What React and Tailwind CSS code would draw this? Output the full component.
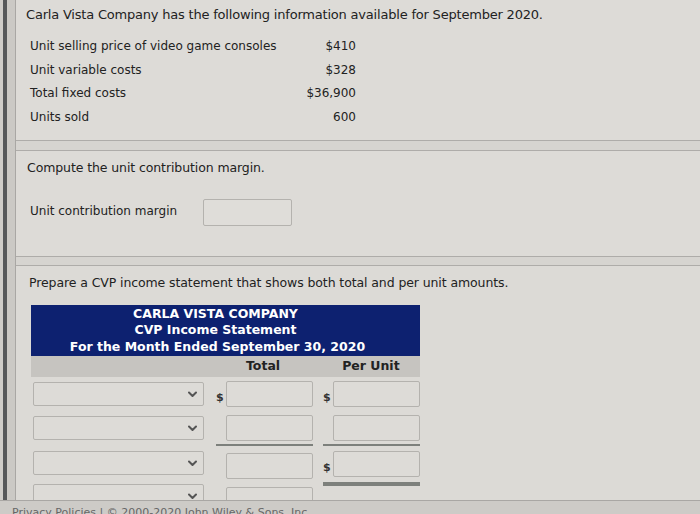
import React from 'react';

const font = { fontFamily: '"DejaVu Sans", Verdana, sans-serif' };

function Chevron() {
  return (
    <svg width="9" height="7" viewBox="0 0 9 7" className="shrink-0">
      <path d="M1 1.5 L4.5 5 L8 1.5" fill="none" stroke="#555" strokeWidth="2" strokeLinecap="round" strokeLinejoin="round" />
    </svg>
  );
}

function Select() {
  return (
    <div className="w-[171px] h-[24px] mr-[2px] shrink-0 items-center border border-[#b4b2ae] rounded-[2px] bg-[#dddbd7] flex justify-end pr-[6px]">
      <Chevron />
    </div>
  );
}

function Box() {
  return <div className="w-[87px] h-[26px] shrink-0 border border-[#b4b2ae] rounded-[2px] bg-[#dddbd7]" />;
}

function Cell({ dollar, line }) {
  return (
    <div className="flex flex-col shrink-0">
      <div className="flex items-center">
        <span className="w-[10px] shrink-0 text-[11px] font-bold text-[#333] mt-[8px]">{dollar ? '$' : ''}</span>
        <Box />
      </div>
      {line === 'single' && <div className="h-[2px] bg-[#7d807c] mt-[3px]" />}
      {line === 'double' && <div className="h-[4px] bg-[#7d807c] mt-[5px]" />}
    </div>
  );
}

export default function App() {
  const facts = [
    ['Unit selling price of video game consoles', '$410'],
    ['Unit variable costs', '$328'],
    ['Total fixed costs', '$36,900'],
    ['Units sold', '600'],
  ];

  return (
    <div style={font} className="w-[700px] h-[514px] overflow-hidden bg-[#d8d6d2] flex flex-col text-[#222]">
      <div className="flex h-[500px] shrink-0">
        {/* left frame edge */}
        <div className="w-[3px] bg-[#cfcdc9]" />
        <div className="w-[4px] bg-[#56585a]" />
        <div className="w-[9px] bg-[#cbc9c5] border-r border-[#a9a7a4]" />

        <div className="flex-1 flex flex-col bg-[#d3d1cd] overflow-hidden">
          {/* facts panel */}
          <div className="h-[141px] shrink-0 bg-[#dddbd7] border-b border-[#aeaca9] pl-[10px] pt-[5px]">
            <p className="text-[13px] tracking-[-0.2px]">Carla Vista Company has the following information available for September 2020.</p>
            <div className="mt-[13px] ml-[4px] w-[326px] flex flex-col gap-[6px] text-[12px]">
              {facts.map(([label, val]) => (
                <div key={label} className="flex justify-between h-[17.5px] items-center">
                  <span>{label}</span>
                  <span>{val}</span>
                </div>
              ))}
            </div>
          </div>

          <div className="h-[9px] shrink-0 bg-[#d6d4d0]" />

          {/* contribution margin panel */}
          <div className="h-[107px] shrink-0 bg-[#dddbd7] border-y border-[#aeaca9] pl-[11px] pt-[8px]">
            <p className="text-[12.5px] tracking-[-0.1px]">Compute the unit contribution margin.</p>
            <div className="mt-[18px] ml-[3px] flex items-center">
              <span className="w-[173px] text-[12px]">Unit contribution margin</span>
              <div className="w-[89px] h-[27px] mt-[3px] border border-[#b4b2ae] rounded-[2px] bg-[#dfddd9]" />
            </div>
          </div>

          <div className="h-[8px] shrink-0 bg-[#d6d4d0]" />

          {/* CVP statement panel */}
          <div className="flex-1 min-h-0 overflow-hidden bg-[#dcdad6] border-t border-[#aeaca9] pl-[13px] pt-[8px]">
            <p className="text-[12.5px] tracking-[-0.1px]">Prepare a CVP income statement that shows both total and per unit amounts.</p>
            <div className="mt-[12px] ml-[2px] w-[389px]">
              <div className="bg-[#0d2170] text-white font-bold text-[12.5px] leading-[16.5px] py-[1px] flex flex-col items-center">
                <span className="-ml-[20px]">CARLA VISTA COMPANY</span>
                <span className="-ml-[20px]">CVP Income Statement</span>
                <span className="-ml-[16px]">For the Month Ended September 30, 2020</span>
              </div>
              <div className="bg-[#c6c4c0] h-[21px] flex items-center text-[12.5px] font-bold text-[#222]">
                <span className="ml-[215px]">Total</span>
                <span className="ml-[62px]">Per Unit</span>
              </div>
              <div className="flex flex-col mt-[4px] ml-[2px]">
                <div className="flex items-start gap-[10px]">
                  <div className="mt-[1px]"><Select /></div>
                  <Cell dollar />
                  <Cell dollar />
                </div>
                <div className="flex items-start gap-[10px] mt-[8px]">
                  <div className="mt-[1px]"><Select /></div>
                  <Cell line="single" />
                  <Cell line="single" />
                </div>
                <div className="flex items-start gap-[10px] mt-[5px]">
                  <Select />
                  <div className="mt-[2px]"><Cell /></div>
                  <Cell dollar line="double" />
                </div>
                <div className="flex items-start gap-[10px] -mt-[2px]">
                  <Select />
                  <div className="mt-[3px]"><Cell /></div>
                </div>
              </div>
            </div>
          </div>
        </div>
      </div>

      {/* footer */}
      <div className="h-[14px] shrink-0 bg-[#cdcbc7] border-t border-[#a9a7a4] overflow-hidden">
        <p className="text-[11px] text-[#666] pl-[12px] mt-[6px] leading-none">Privacy Policies | © 2000-2020 John Wiley &amp; Sons, Inc.</p>
      </div>
    </div>
  );
}
